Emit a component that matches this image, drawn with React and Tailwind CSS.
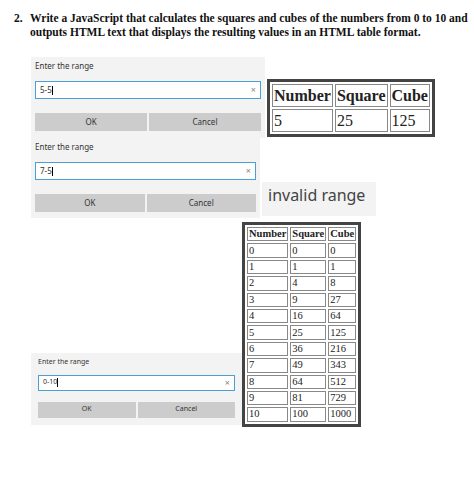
import React from "react";

const rows = [0, 1, 2, 3, 4, 5, 6, 7, 8, 9, 10].map((n) => [n, n * n, n * n * n]);

// Windows-style prompt dialog
const Prompt = ({ value, w, big, pad }) => (
  <div className={`bg-[#f3f3f3] ${w} ${pad} font-['Noto_Sans',sans-serif] text-[#333]`}>
    <div className={big ? "text-[8px] leading-[16px]" : "text-[7px] leading-[16px]"}>Enter the range</div>
    <div
      className={`${big ? "mt-[7px] h-[18px]" : "mt-[5px] h-[16px]"} flex items-center justify-between border border-[#4b9fd5] bg-white px-[4px]`}
    >
      <span className={big ? "text-[8px]" : "text-[7px]"}>
        {value}
        <span className="inline-block w-px h-[9px] bg-black align-middle" />
      </span>
      <span className="text-[9px] text-[#888]">×</span>
    </div>
    <div className={`${big ? "mt-[14px]" : "mt-[11px]"} grid grid-cols-2 gap-[2px]`}>
      <div className={`${big ? "h-[18px] text-[8px]" : "h-[16px] text-[7px]"} flex items-center justify-center bg-[#cccccc]`}>OK</div>
      <div className={`${big ? "h-[18px] text-[8px]" : "h-[16px] text-[7px]"} flex items-center justify-center bg-[#cccccc]`}>Cancel</div>
    </div>
  </div>
);

const HtmlTable = ({ data, cell, head }) => (
  <table className="border-separate border-spacing-[2px] border-[3px] border-[#444] bg-white font-['Liberation_Serif',serif] text-[#222]">
    <thead>
      <tr>
        {["Number", "Square", "Cube"].map((h) => (
          <th key={h} className={`border border-[#888] text-left px-[1px] ${head}`}>
            {h}
          </th>
        ))}
      </tr>
    </thead>
    <tbody>
      {data.map((r) => (
        <tr key={r[0]}>
          {r.map((v, i) => (
            <td key={i} className={`border border-[#888] px-[1px] ${cell}`}>
              {v}
            </td>
          ))}
        </tr>
      ))}
    </tbody>
  </table>
);

export default function App() {
  return (
    <div className="w-[474px] h-[484px] bg-white overflow-hidden">
      {/* question */}
      <div className="flex pt-[11px] pl-[14px] font-['Liberation_Serif',serif] font-bold text-[11.5px] leading-[14px] text-[#111]">
        <span className="w-[16px] shrink-0">2.</span>
        <p>
          Write a JavaScript that calculates the squares and cubes of the numbers from 0 to 10 and outputs HTML
          text that displays the resulting values in an HTML table format.
        </p>
      </div>

      {/* 5-5 */}
      <div className="flex mt-[18px] pl-[31px]">
        <Prompt value="5-5" w="w-[234px]" big pad="px-[4px] pt-[1px] pb-[7px]" />
        <div className="ml-[2px] mt-[22px]">
          <HtmlTable data={[[5, 25, 125]]} head="text-[16px] h-[23px] leading-[18px]" cell="text-[16px] h-[23px] leading-[18px]" />
        </div>
      </div>

      {/* 7-5 */}
      <div className="flex items-start pl-[31px]">
        <Prompt value="7-5" w="w-[229px]" big pad="px-[4px] pt-[1px] pb-[6px]" />
        <div className="ml-[2px] mt-[44px] h-[34px] w-[114px] whitespace-nowrap bg-[#f3f3f3] px-[6px] font-['Noto_Sans',sans-serif] text-[16px] leading-[26px] text-[#444]">
          invalid range
        </div>
      </div>

      {/* 0-10 */}
      <div className="flex items-end pl-[31px] mt-[4px]">
        <div className="mb-[2px]">
          <Prompt value="0-10" w="w-[211px]" pad="px-[7px] pt-[1px] pb-[7px]" />
        </div>
        <HtmlTable data={rows} head="text-[10.5px] h-[14.4px] leading-[12px]" cell="text-[10.5px] h-[14.4px] leading-[12px]" />
      </div>
    </div>
  );
}
